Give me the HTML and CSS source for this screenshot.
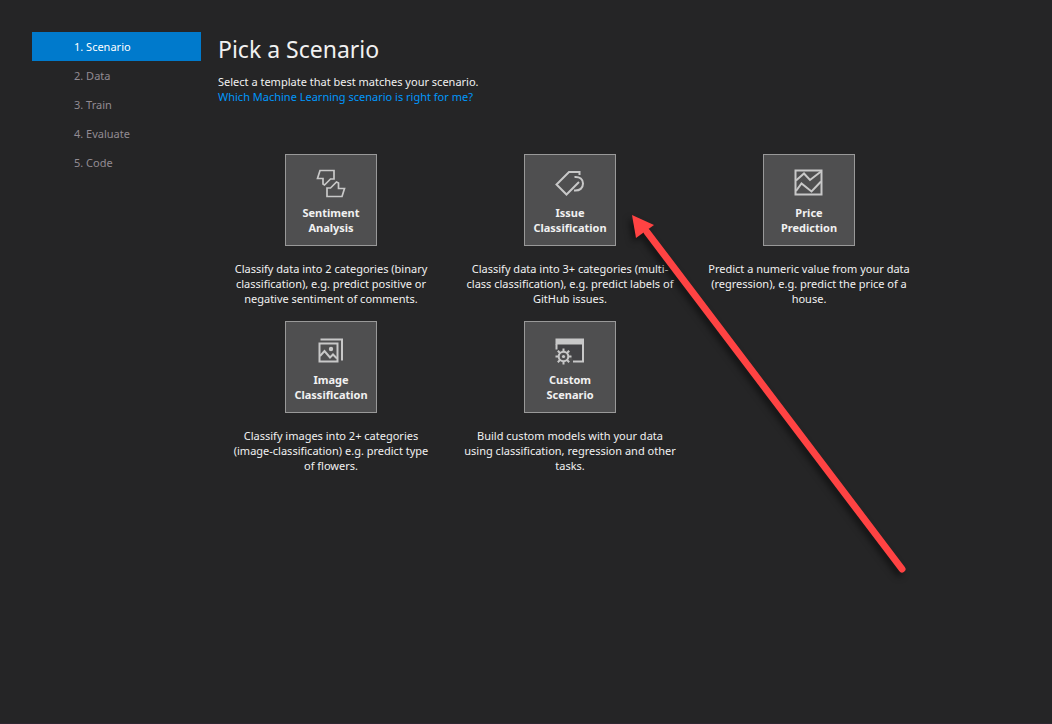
FILE: index.html
```html
<!DOCTYPE html>
<html lang="en">

<head>
    <meta charset="utf-8">
    <meta name="viewport" content="width=device-width">
    <title>Pick a Scenario</title>
    <link rel="stylesheet" href="styles.css">
</head>

<body>
    <nav class="steps">
        <a class="step active" href="#scenario">1. Scenario</a>
        <a class="step" href="#data">2. Data</a>
        <a class="step" href="#train">3. Train</a>
        <a class="step" href="#evaluate">4. Evaluate</a>
        <a class="step" href="#code">5. Code</a>
    </nav>
    <main class="content">
        <h1>Pick a Scenario</h1>
        <p>Select a template that best matches your scenario.</p>
        <a class="help" href="#help">Which Machine Learning scenario is right for me?</a>

        <div class="scenarios">
            <div class="scenario">
                <button class="tile" type="button">
                    <svg class="icon thumbs" viewBox="0 0 30 30">
                        <path d="M18 2.500V11H14.500L8.500 17L7 16V10.500H1.500L4 2.500Z" />
                        <path d="M11 28.500V20H14.500L20.500 14L22.500 15V20.500H28.500L26 28.500Z" />
                    </svg>
                    Sentiment<br>Analysis
                </button>
                <p>Classify data into 2 categories (binary classification), e.g. predict positive or negative sentiment of comments.</p>
            </div>
            <div class="scenario">
                <button class="tile" type="button">
                    <svg class="icon" viewBox="0 0 30 30">
                        <path d="M24.500 7V4H14L1.500 16.500L11.500 26.500L24 14" />
                        <path d="M19.500 9C25 8.500 28 11.500 28 15.500C28 20 25 23 19 22.500" />
                    </svg>
                    Issue<br>Classification
                </button>
                <p>Classify data into 3+ categories (multi-class classification), e.g. predict labels of GitHub issues.</p>
            </div>
            <div class="scenario">
                <button class="tile" type="button">
                    <svg class="icon" viewBox="0 0 30 30">
                        <path d="M1.500 2.500H27.500V26.500H1.500Z" />
                        <path d="M2 12.500L10 5.500L16 12L27 3.500M2 23L7.500 15.500L17.500 23.500L27 13.500" />
                    </svg>
                    Price<br>Prediction
                </button>
                <p>Predict a numeric value from your data (regression), e.g. predict the price of a house.</p>
            </div>
            <div class="scenario">
                <button class="tile" type="button">
                    <svg class="icon" viewBox="0 0 30 30">
                        <path d="M3.500 8.500H21.500V26.500H3.500Z" />
                        <path d="M4.500 4.500H26V25.500" />
                        <path d="M4 21L8.500 16L14 22.500L17 19.500L21 23.500" />
                        <circle class="solid" cx="15" cy="14" r="2.200" />
                    </svg>
                    Image<br>Classification
                </button>
                <p>Classify images into 2+ categories (image-classification) e.g. predict type of&nbsp;flowers.</p>
            </div>
            <div class="scenario">
                <button class="tile" type="button">
                    <svg class="icon" viewBox="0 0 30 30">
                        <path class="pane" d="M2 9H28V26H18L14 15H2Z" />
                        <path class="solid" d="M.5 3.500H29V9.500H.5Z" />
                        <path d="M1.500 9V14.500M28 9V26.500H18" />
                        <circle cx="8.500" cy="21.500" r="4.800" />
                        <circle class="solid" cx="8.500" cy="21.500" r="1.600" />
                        <path d="M8.500 13.500V16.500M8.500 26.500V29.500M.5 21.500H3.500M13.500 21.500H16.500M2.800 15.800L5 18M12 25L14.200 27.200M14.200 15.800L12 18M5 25L2.800 27.200" />
                    </svg>
                    Custom<br>Scenario
                </button>
                <p>Build custom models with your data using classification, regression and other tasks.</p>
            </div>

            <svg class="pointer" viewBox="0 0 290 370" width="290" height="370">
                <path class="shaft" d="M18 22L273 359" />
                <path class="head" d="M3 5L25 15L7 28Z" />
            </svg>
        </div>
    </main>
</body>

</html>
```
FILE: styles.css
```css
* {
    box-sizing: border-box;
}

body {
    display: flex;
    align-items: flex-start;
    gap: 17px;
    min-height: 100vh;
    margin: 0;
    padding: 32px;
    font-family: "Noto Sans", "Open Sans", sans-serif;
    font-size: 11px;
    line-height: 15px;
    color: #f1f1f1;
    background-color: #252526;
    border-bottom: 1px solid #2d2630;
}

h1 {
    margin: 0 0 8px;
    font-size: 23px;
    font-weight: normal;
    line-height: 34px;
}

p {
    margin: 0;
}

.steps {
    flex: 0 0 169px;
}

.step {
    display: block;
    padding: 7px 42px;
    color: #928b92;
    text-decoration: none;
}

.step.active {
    color: #fff;
    background-color: #007acc;
}

.content {
    flex: 1;
}

.help {
    display: block;
    color: #0097fb;
    text-decoration: none;
}

.scenarios {
    position: relative;
    display: grid;
    grid-template-columns: repeat(3, 1fr);
    gap: 15px 13px;
    max-width: 704px;
    margin-top: 50px;
}

.scenario {
    display: flex;
    flex-direction: column;
    align-items: center;
    gap: 15px;
    text-align: center;
}

.scenario p {
    padding: 0 6px;
}

.tile {
    width: 92px;
    height: 92px;
    padding: 2px 0 0;
    font: inherit;
    font-weight: bold;
    color: #f1f1f1;
    background-color: #4f4f50;
    border: 1px solid #999;
    cursor: pointer;
}

.icon {
    display: block;
    width: 30px;
    height: 30px;
    margin: 0 auto 7px;
    fill: none;
    stroke: #c8c8c8;
    stroke-width: 2;
}

.icon.thumbs {
    stroke-width: 1.7;
}

.icon .solid {
    fill: #c8c8c8;
    stroke: none;
}

.icon .pane {
    fill: #424245;
    stroke: none;
}

/* arrow drawn over the cards */
.pointer {
    position: absolute;
    top: 56px;
    left: 411px;
    pointer-events: none;
    filter: drop-shadow(-3px 4px 3px rgba(0, 0, 0, 0.5));
}

.shaft {
    fill: none;
    stroke: #ff4343;
    stroke-width: 7;
    stroke-linecap: round;
}

.head {
    fill: #ff4343;
}
```
